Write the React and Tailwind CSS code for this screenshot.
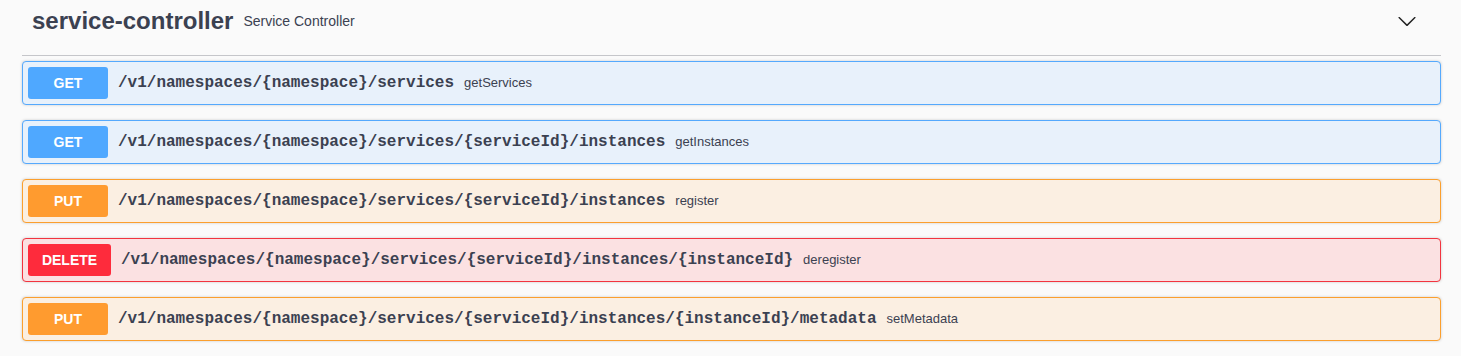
import { useState } from 'react'

const ops = [
  { method: 'GET', path: '/v1/namespaces/{namespace}/services', summary: 'getServices' },
  { method: 'GET', path: '/v1/namespaces/{namespace}/services/{serviceId}/instances', summary: 'getInstances' },
  { method: 'PUT', path: '/v1/namespaces/{namespace}/services/{serviceId}/instances', summary: 'register' },
  { method: 'DELETE', path: '/v1/namespaces/{namespace}/services/{serviceId}/instances/{instanceId}', summary: 'deregister' },
  { method: 'PUT', path: '/v1/namespaces/{namespace}/services/{serviceId}/instances/{instanceId}/metadata', summary: 'setMetadata' },
]

const styles = {
  GET: { block: 'border-[#55a9fd] bg-[#e8f1fb]', badge: 'bg-[#4fa8ff] w-[80px]' },
  PUT: { block: 'border-[#fb9f2e] bg-[#fbefe2]', badge: 'bg-[#ff9b2f] w-[80px]' },
  DELETE: { block: 'border-[#f2343f] bg-[#fbe1e2]', badge: 'bg-[#fe2b3c] w-[83px]' },
}

function ArrowDown() {
  return (
    <svg width="20" height="20" viewBox="0 0 20 20" className="fill-[#222]">
      <path d="M17.418 6.109c.272-.268.709-.268.979 0s.271.701 0 .969l-7.908 7.83c-.27.268-.707.268-.979 0l-7.908-7.83c-.27-.268-.27-.701 0-.969.271-.268.709-.268.979 0L10 13.25l7.418-7.141z" />
    </svg>
  )
}

function Operation({ op }) {
  const s = styles[op.method]
  return (
    <div className={`border rounded-[4px] shadow-[0_0_3px_rgba(0,0,0,0.19)] ${s.block}`}>
      <div className="flex items-center p-[5px] cursor-pointer">
        <span className={`${s.badge} shrink-0 text-center text-white font-bold text-[14px] leading-[20px] py-[6px] rounded-[3px] font-['Liberation_Sans',Arial,sans-serif]`}>
          {op.method}
        </span>
        <span className="px-[10px] text-[16px] font-bold text-[#3b4151] font-['Liberation_Mono','Courier_New',monospace]">
          {op.path}
        </span>
        <span className="text-[13px] text-[#3b4151] font-['Liberation_Sans',Arial,sans-serif]">
          {op.summary}
        </span>
      </div>
    </div>
  )
}

export default function App() {
  const [open, setOpen] = useState(true)

  return (
    <div className="min-h-[356px] bg-[#fafafa] pl-[22px] pr-[20px] font-['Liberation_Sans',Arial,sans-serif] text-[#3b4151]">
      <div className="border-b border-[#c5c6ca] pb-[13px]">
        <div className="flex items-center h-[42px] pl-[10px] pr-[24px]">
          <h4 className="text-[24px] font-bold leading-[30px]">service-controller</h4>
          <small className="text-[14px] px-[10px]">Service Controller</small>
          <button onClick={() => setOpen(!open)} className="ml-auto">
            <ArrowDown />
          </button>
        </div>
      </div>

      {open && (
        <div className="mt-[5px] flex flex-col gap-[15px]">
          {ops.map((op, i) => (
            <Operation key={i} op={op} />
          ))}
        </div>
      )}
    </div>
  )
}
